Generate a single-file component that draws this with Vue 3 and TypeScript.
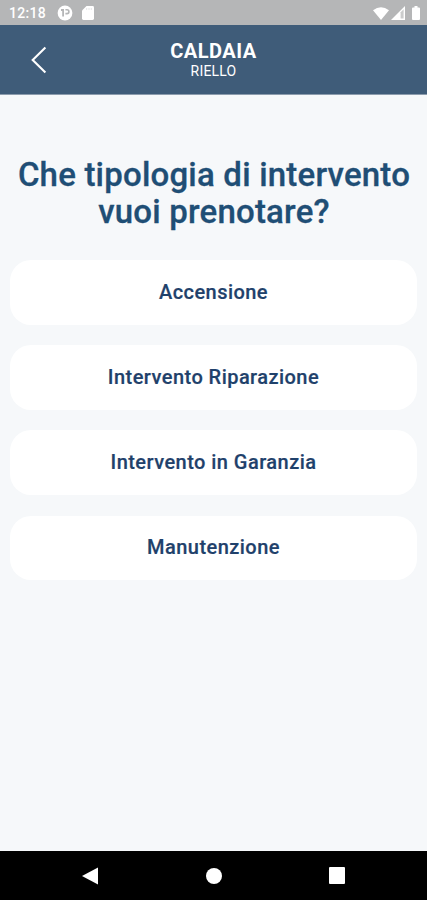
<script setup lang="ts">
const options: string[] = [
  'Accensione',
  'Intervento Riparazione',
  'Intervento in Garanzia',
  'Manutenzione',
]
</script>

<template>
  <div class="screen">
    <div class="status">
      <span class="clock">12:18</span>
      <svg class="notif" viewBox="0 0 16 16" width="16" height="16">
        <circle cx="8" cy="8" r="7.400" fill="#fff" />
        <path d="M4 4H7V11.500H5.200V6H4ZM8.400 4H10A2.700 2.700 0 0 1 10 9.400H8.400V7.800H10A1.100 1.100 0 0 0 10 5.600H8.400Z" fill="#b5b6b7" />
      </svg>
      <svg class="sd" viewBox="0 0 12 14" width="12" height="14">
        <path d="M4.500 0H10.600Q12 0 12 1.400V12.600Q12 14 10.600 14H1.400Q0 14 0 12.600V4.600Z" fill="#fff" />
        <path d="M4.700 2v2M7 2v2M9.300 2v2" stroke="#e3e3e4" stroke-width="0.900" />
      </svg>
      <div class="signals">
        <svg viewBox="0 0 16 13" width="16" height="13">
          <path d="M0 3.200Q8-2.800 16 3.200L8 13Z" fill="#fff" />
        </svg>
        <svg viewBox="0 0 14 14" width="14" height="14">
          <path d="M0 14 14 0V14Z" fill="#fff" />
          <path d="M9.600 6.300 12.600 3.300V12.600H9.600Z" fill="#cbcccc" />
        </svg>
        <svg class="battery" viewBox="0 0 8 14" width="8" height="14">
          <path d="M2.500 0h3v1.500H7q1 0 1 1V13q0 1-1 1H1q-1 0-1-1V2.500q0-1 1-1h1.500Z" fill="#fff" />
        </svg>
      </div>
    </div>

    <header class="header">
      <button class="back" aria-label="Indietro">
        <svg viewBox="0 0 16 28" width="16" height="28">
          <path d="M14.400 1.500 1.700 14 14.400 26.500" fill="none" stroke="#fff" stroke-width="2.100" />
        </svg>
      </button>
      <div class="titles">
        <div class="title">CALDAIA</div>
        <div class="subtitle">RIELLO</div>
      </div>
    </header>

    <main class="content">
      <h1 class="question">Che tipologia di intervento<br />vuoi prenotare?</h1>
      <div class="options">
        <button v-for="option in options" :key="option" class="option">{{ option }}</button>
      </div>
    </main>

    <nav class="navbar">
      <svg viewBox="0 0 16 18" width="16" height="18"><path d="M0 9 16 .500v17Z" fill="#fff" /></svg>
      <svg viewBox="0 0 16 16" width="16" height="16"><circle cx="8" cy="8" r="8" fill="#fff" /></svg>
      <svg viewBox="0 0 16 17" width="16" height="17"><rect width="16" height="17" rx="1" fill="#fff" /></svg>
    </nav>
  </div>
</template>

<style>
body {
  margin: 0;
}
</style>

<style scoped>
.screen {
  width: 427px;
  height: 900px;
  display: flex;
  flex-direction: column;
  overflow: hidden;
  background: #f6f8fa;
  font-family: Roboto, 'Liberation Sans', sans-serif;
}

button {
  border: 0;
  padding: 0;
  background: none;
  font-family: inherit;
}

svg {
  display: block;
}

.status {
  box-sizing: border-box;
  height: 25px;
  flex: none;
  display: flex;
  align-items: center;
  padding: 1px 7px 0 9px;
  background: #b5b6b7;
  color: #fff;
}

.clock {
  width: 48px;
  font-size: 14px;
  font-weight: 500;
  letter-spacing: 0.3px;
  line-height: 24px;
}

.sd {
  margin-left: 9px;
}

.signals {
  margin-left: auto;
  display: flex;
  align-items: center;
  gap: 2px;
}

.battery {
  margin-left: 5px;
}

.header {
  box-sizing: border-box;
  height: 70px;
  flex: none;
  display: grid;
  grid-template-columns: 80px 1fr 80px;
  align-items: center;
  background: #3f5c79;
  border-bottom: 1px solid #8c9cad;
  color: #fff;
  text-align: center;
}

.back {
  width: 16px;
  margin-left: 31px;
}

.title {
  font-size: 20px;
  font-weight: 700;
  line-height: 23px;
  letter-spacing: 0.5px;
}

.subtitle {
  font-size: 14px;
  line-height: 16px;
  letter-spacing: 0.2px;
}

.content {
  flex: 1;
  padding: 61px 10px 0;
}

.question {
  margin: 0;
  padding-left: 1px;
  text-align: center;
  white-space: nowrap;
  font-size: 33px;
  font-weight: 500;
  letter-spacing: 0.2px;
  line-height: 37px;
  color: #1f4e75;
  -webkit-text-stroke: 0.300px #1f4e75;
}

.options {
  display: flex;
  flex-direction: column;
  gap: 20.600px;
  margin-top: 30.300px;
}

.option {
  height: 64.500px;
  padding-bottom: 1px;
  border-radius: 21px;
  background: #fff;
  color: #1f416b;
  font-size: 20px;
  font-weight: 500;
  letter-spacing: 0.45px;
  -webkit-text-stroke: 0.200px #1f416b;
}

.navbar {
  height: 49px;
  flex: none;
  display: flex;
  align-items: center;
  justify-content: space-between;
  box-sizing: border-box;
  padding: 0 82px 0 82px;
  background: #000;
}
</style>
